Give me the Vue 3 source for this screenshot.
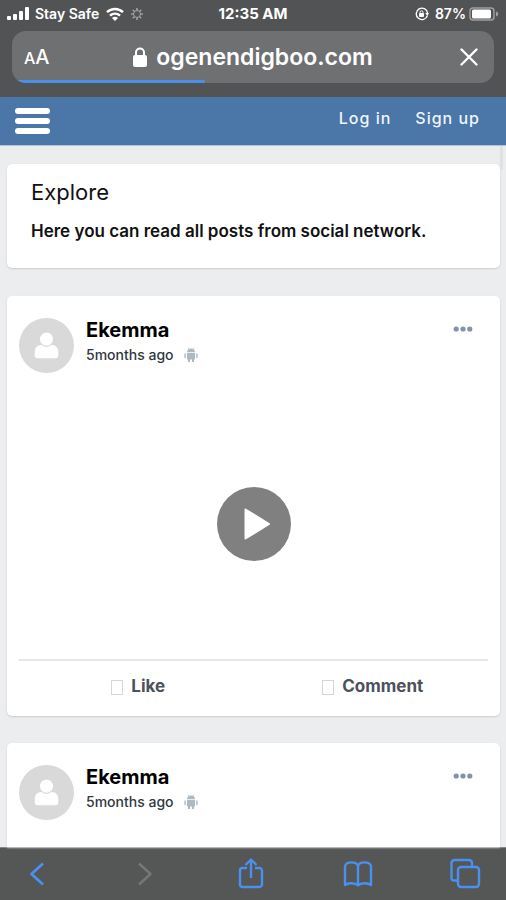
<script setup>
const posts = [
  { id: 1, author: 'Ekemma', time: '5months ago', loaded: true },
  { id: 2, author: 'Ekemma', time: '5months ago', loaded: false },
]
</script>

<template>
  <div class="screen">
    <header class="browser">
      <div class="status">
        <div class="status-side">
          <svg class="signal" viewBox="0 0 22 14" aria-hidden="true">
            <rect x="0" y="9" width="4" height="4" rx="1" />
            <rect x="6" y="7" width="4" height="6" rx="1" />
            <rect x="12" y="4" width="4" height="9" rx="1" />
            <rect x="18" y="0" width="4" height="13" rx="1" />
          </svg>
          <span>Stay Safe</span>
          <svg class="wifi" viewBox="0 0 20 14" aria-hidden="true">
            <path d="M2 5.2a11.6 11.6 0 0 1 16 0M5 8.6a7.2 7.2 0 0 1 10 0" fill="none" stroke="#fff" stroke-width="2.4" />
            <path d="M7 11a4.2 4.2 0 0 1 6 0l-3 3z" />
          </svg>
          <svg class="spinner" viewBox="0 0 12 12" aria-hidden="true">
            <circle cx="6" cy="6" r="3.5" fill="none" stroke="#aaa" stroke-width="1" />
            <path d="M6 0v2M6 10v2M0 6h2M10 6h2M1.8 1.8l1.4 1.4M8.8 8.8l1.4 1.4M1.8 10.2l1.4-1.4M8.8 3.2l1.4-1.4" stroke="#bbb" stroke-width="1.2" />
          </svg>
        </div>
        <span class="clock">12:35 AM</span>
        <div class="status-side right">
          <svg class="rotation" viewBox="0 0 14 14" aria-hidden="true">
            <path d="M12.4 8.6A5.7 5.7 0 1 1 12.6 6" fill="none" stroke="#fff" stroke-width="1.4" />
            <path d="M10.2 6h3.8l-1.6 3z" />
            <rect x="4" y="6" width="5" height="4" rx="1" />
            <path d="M5 6.500V5.300a1.500 1.500 0 0 1 3 0v1.200" fill="none" stroke="#fff" />
          </svg>
          <span>87%</span>
          <svg class="battery" viewBox="0 0 30 14" aria-hidden="true">
            <rect x="1" y="1" width="24" height="12" rx="3" fill="none" stroke="#a0a0a0" stroke-width="1.4" />
            <rect x="3" y="2.500" width="19" height="9" rx="1.500" />
            <path d="M27 4.500c3 .8 3 4.200 0 5z" fill="#a0a0a0" />
          </svg>
        </div>
      </div>
      <div class="address">
        <button class="text-size" type="button" aria-label="Text size"><span class="small-a">A</span>A</button>
        <div class="site">
          <svg class="lock" viewBox="0 0 14 20" aria-hidden="true">
            <path d="M3 10V5.500a4 4 0 0 1 8 0V10" fill="none" stroke="#fff" stroke-width="2" />
            <rect x="0" y="8" width="14" height="12" rx="2" />
          </svg>
          <span>ogenendigboo.com</span>
        </div>
        <button class="stop" type="button" aria-label="Stop loading">
          <svg viewBox="0 0 18 18"><path d="M1.500 1.500l15 15M16.500 1.500l-15 15" fill="none" stroke="#fff" stroke-width="2.400" stroke-linecap="round" /></svg>
        </button>
        <div class="progress"></div>
      </div>
    </header>

    <nav class="navbar">
      <button class="menu" type="button" aria-label="Menu">
        <span></span><span></span><span></span>
      </button>
      <div class="links">
        <a href="#login">Log in</a>
        <a href="#signup">Sign up</a>
      </div>
    </nav>

    <main class="feed">
      <section class="card intro">
        <h1>Explore</h1>
        <p>Here you can read all posts from social network.</p>
      </section>

      <article v-for="post in posts" :key="post.id" class="card post" :class="{ pending: !post.loaded }">
        <div class="post-head">
          <svg class="avatar" viewBox="0 0 56 56" aria-hidden="true">
            <circle cx="28" cy="28" r="28" fill="#d9d9d9" />
            <path d="M16 38v-3.500c0-4 2.500-7 6.500-7h11c4 0 6.500 3 6.500 7V38c0 2-1 3-3 3H19c-2 0-3-1-3-3z" fill="#fff" />
            <circle cx="28" cy="21.500" r="7.300" fill="#fff" stroke="#d9d9d9" stroke-width="1.200" />
          </svg>
          <div class="who">
            <h2>{{ post.author }}</h2>
            <div class="meta">
              <span>{{ post.time }}</span>
              <svg class="android" viewBox="0 0 14 16" aria-hidden="true">
                <path d="M3 5.200a4 3.800 0 0 1 8 0zM3 6h8v6.500H3zM4 12h2v3H4zM8 12h2v3H8z" fill="#aebac2" />
                <path d="M4 .5l1 1.700M10 .5L9 2.200" stroke="#c3ccd2" stroke-width=".8" />
                <path d="M1.100 7v3.500M12.900 7v3.500" stroke="#b7c2ca" stroke-width="1.600" stroke-linecap="round" />
              </svg>
            </div>
          </div>
          <button class="more" type="button" aria-label="More options">
            <svg viewBox="0 0 20 6"><circle cx="3.200" cy="3" r="2.600" /><circle cx="10" cy="3" r="2.600" /><circle cx="16.800" cy="3" r="2.600" /></svg>
          </button>
        </div>
        <template v-if="post.loaded">
          <div class="video">
            <button class="play" type="button" aria-label="Play video">
              <svg viewBox="0 0 74 74">
                <circle cx="37" cy="37" r="37" fill="#808080" />
                <path d="M28.500 22.500L52 37 28.500 51.500z" fill="#fff" stroke="#fff" stroke-width="2" stroke-linejoin="round" />
              </svg>
            </button>
          </div>
          <div class="actions">
            <button type="button"><i class="box"></i>Like</button>
            <button type="button"><i class="box"></i>Comment</button>
          </div>
        </template>
      </article>
      <div class="scroll-thumb"></div>
    </main>

    <footer class="toolbar">
      <button type="button" aria-label="Back">
        <svg viewBox="0 0 32 32"><path d="M21 5.500L9.500 16 21 26.500" stroke-width="2.800" /></svg>
      </button>
      <button type="button" aria-label="Forward" disabled>
        <svg viewBox="0 0 32 32"><path d="M10 5.500L21.500 16 10 26.500" stroke-width="2.400" /></svg>
      </button>
      <button type="button" aria-label="Share">
        <svg viewBox="0 0 32 32"><path d="M11 10H6.500A2.500 2.500 0 0 0 4 12.500v14A2.500 2.500 0 0 0 6.500 29h17a2.500 2.500 0 0 0 2.500-2.500v-14a2.500 2.500 0 0 0-2.500-2.500H19M15 20V1.500M9.500 7L15 1.500 20.500 7" /></svg>
      </button>
      <button type="button" aria-label="Bookmarks">
        <svg viewBox="0 0 32 32"><path d="M16 8v19.500M16 8C14.500 3.200 4.500 3.200 3 8v19c3-2.500 10-2.500 13 .5 3-3 10-3 13-.5V8C27.500 3.200 17.500 3.200 16 8z" /></svg>
      </button>
      <button type="button" aria-label="Tabs">
        <svg viewBox="0 0 32 32"><rect x="9" y="9" width="21" height="20" rx="3" /><path d="M8 22.500H5A2.500 2.500 0 0 1 2.500 20V5A3 3 0 0 1 5.500 2H20a3 3 0 0 1 3 3v3" /></svg>
      </button>
    </footer>
  </div>
</template>

<style>
body {
  margin: 0;
}
</style>

<style scoped>
.screen {
  display: flex;
  flex-direction: column;
  min-height: 100vh;
  background: #ebedef;
  color: #111;
  font-family: Inter, "Liberation Sans", sans-serif;
}

button {
  padding: 0;
  border: 0;
  background: none;
  color: inherit;
  font: inherit;
}

svg {
  display: block;
}

.browser {
  flex: none;
  padding: 0 12px 14px;
  background: #525354;
  color: #fff;
}

.status {
  display: grid;
  grid-template-columns: 1fr auto 1fr;
  align-items: center;
  height: 27px;
  margin: 0 -5px 4px;
  font-size: 14px;
  font-weight: 600;
}

.clock {
  font-size: 15px;
  font-weight: 700;
}

.status-side {
  display: flex;
  align-items: center;
  gap: 6px;
  white-space: nowrap;
}

.right {
  justify-content: flex-end;
}

.signal,
.lock,
.wifi,
.rotation,
.battery {
  fill: #fff;
}

.signal {
  width: 22px;
  height: 14px;
}

.wifi {
  width: 20px;
  height: 14px;
}

.spinner {
  width: 12px;
  height: 12px;
}

.rotation {
  width: 14px;
  height: 14px;
}

.battery {
  width: 30px;
  height: 14px;
  margin-left: -3px;
}

.address {
  position: relative;
  display: grid;
  grid-template-columns: 1fr auto 1fr;
  align-items: center;
  height: 52px;
  padding: 0 12px;
  border-radius: 14px;
  background: #6f7072;
  overflow: hidden;
}

.text-size {
  justify-self: start;
  font-size: 20px;
  font-weight: 500;
}

.small-a {
  font-size: 16px;
}

.site {
  display: flex;
  align-items: center;
  gap: 9px;
  font-size: 23px;
  font-weight: 600;
}

.lock {
  width: 14px;
  height: 20px;
}

.stop {
  justify-self: end;
  width: 18px;
  height: 18px;
  margin-right: 4px;
}

.progress {
  position: absolute;
  left: 0;
  bottom: 0;
  width: 40%;
  height: 3px;
  border-radius: 0 2px 2px 0;
  background: #4a90e8;
}

.navbar {
  display: flex;
  flex: none;
  align-items: center;
  justify-content: space-between;
  height: 48px;
  padding: 0 26px 0 15px;
  border-bottom: 1px solid #b4c4d8;
  background: #4a76a8;
}

.menu {
  display: grid;
  gap: 4px;
  width: 35px;
}

.menu span {
  height: 6px;
  border-radius: 3px;
  background: #fff;
}

.links {
  display: flex;
  gap: 24px;
  padding-bottom: 6px;
}

.links a {
  color: #f0f5fb;
  font-size: 16px;
  font-weight: 500;
  letter-spacing: 1px;
  text-decoration: none;
}

.feed {
  position: relative;
  display: flex;
  flex: 1;
  flex-direction: column;
  gap: 28px;
  padding: 18px 6px 0 7px;
}

.card {
  flex: none;
  border-radius: 5px;
  background: #fff;
  box-shadow: 0 1px 2px #c8cccf;
}

.intro {
  padding: 14px 24px 24px;
}

.intro h1 {
  margin: 0 0 12px;
  font-size: 22px;
  font-weight: 400;
  line-height: 28px;
}

.intro p {
  margin: 0;
  font-size: 17px;
  font-weight: 600;
  line-height: 26px;
}

.post {
  padding: 22px 12px 0;
}

.post + .post {
  margin-top: -1px;
}

.pending {
  flex: 1;
  border-radius: 5px 5px 0 0;
}

.post-head {
  display: flex;
  align-items: flex-start;
  gap: 12px;
}

.avatar {
  width: 55px;
  height: 55px;
}

.who {
  flex: 1;
}

.who h2 {
  margin: 0;
  color: #000;
  font-size: 20px;
  font-weight: 700;
  line-height: 24px;
}

.meta {
  display: flex;
  align-items: center;
  gap: 10px;
  margin-top: 3px;
  color: #303840;
  font-size: 14px;
  font-weight: 500;
  line-height: 20px;
}

.android {
  width: 14px;
  height: 16px;
}

.more {
  width: 20px;
  margin: 8px 15px 0 0;
  fill: #8291ad;
}

.video {
  display: grid;
  place-items: center;
  height: 286px;
}

.play {
  width: 74px;
  height: 74px;
  margin-top: 16px;
}

.actions {
  display: grid;
  grid-template-columns: 1fr 1fr;
  border-top: 2px solid #e5e6e7;
}

.actions button {
  display: flex;
  align-items: center;
  justify-content: center;
  gap: 8px;
  height: 55px;
  padding: 0 0 6px 4px;
  color: #4c515b;
  font-size: 17px;
  font-weight: 700;
}

.box {
  box-sizing: border-box;
  width: 12px;
  height: 15px;
  margin-top: 4px;
  border: 1px solid #d6d6d6;
}

.scroll-thumb {
  position: absolute;
  top: 0;
  right: 3px;
  width: 3px;
  height: 24px;
  border-radius: 0 0 2px 2px;
  background: #dfe1e4;
}

.toolbar {
  display: flex;
  flex: none;
  align-items: center;
  justify-content: space-between;
  height: 52px;
  padding: 0 25px 0 22px;
  border-top: 1px solid #858585;
  background: #555656;
}

.toolbar button {
  width: 32px;
  height: 32px;
}

.toolbar svg {
  fill: none;
  stroke: #4a90ee;
  stroke-width: 2.4;
  stroke-linejoin: round;
}

.toolbar button:disabled svg {
  stroke: #767778;
}
</style>
